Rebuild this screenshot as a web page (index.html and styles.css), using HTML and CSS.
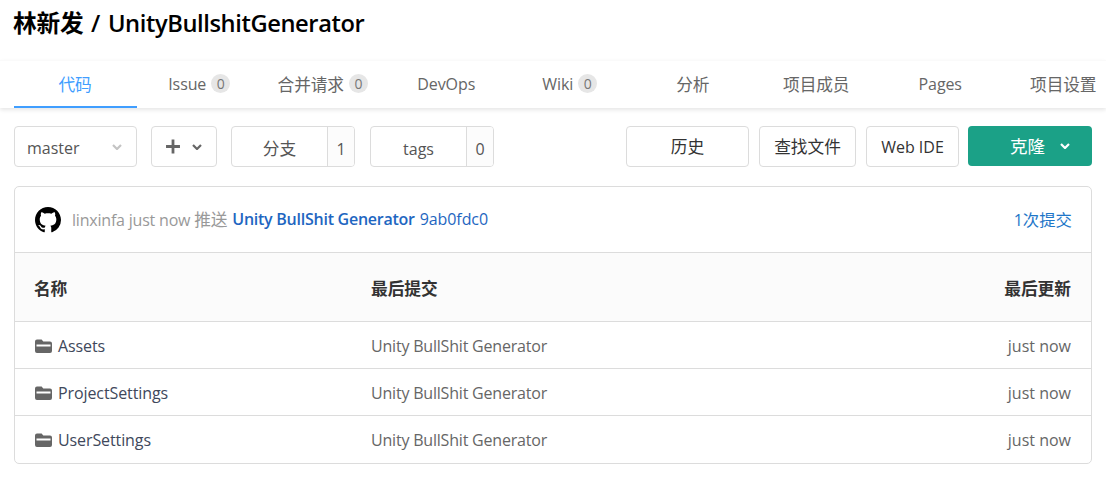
FILE: index.html
```html
<!DOCTYPE html>
<html lang="zh">
<head>
<meta charset="utf-8">
<title>UnityBullshitGenerator</title>
<link rel="stylesheet" href="styles.css">
</head>
<body>
<h1 class="title"><span class="title-owner">林新发</span> / <span class="title-repo">UnityBullshitGenerator</span></h1>
<nav class="tabs">
  <a class="tab active cjk">代码</a>
  <a class="tab">Issue<span class="count">0</span></a>
  <a class="tab"><span class="cjk">合并请求</span><span class="count">0</span></a>
  <a class="tab">DevOps</a>
  <a class="tab">Wiki<span class="count">0</span></a>
  <a class="tab cjk">分析</a>
  <a class="tab cjk">项目成员</a>
  <a class="tab">Pages</a>
  <a class="tab cjk">项目设置</a>
</nav>
<div class="toolbar">
  <div class="btn select"><span class="select-label">master</span>
    <svg class="chev light" viewBox="0 0 10 6"><path d="M1 1l4 4 4-4"/></svg></div>
  <div class="btn add">
    <svg class="plus" viewBox="0 0 14 14"><path d="M7 0.5v13M0.5 7h13"/></svg>
    <svg class="chev" viewBox="0 0 10 6"><path d="M1 1l4 4 4-4"/></svg></div>
  <div class="btn stat"><span class="stat-label cjk">分支</span><span class="stat-num">1</span></div>
  <div class="btn stat"><span class="stat-label latin">tags</span><span class="stat-num">0</span></div>
  <div class="spacer"></div>
  <div class="btn action history cjk">历史</div>
  <div class="btn action find cjk">查找文件</div>
  <div class="btn action ide">Web IDE</div>
  <div class="btn clone"><span class="clone-label">克隆</span>
    <svg class="chev white" viewBox="0 0 10 6"><path d="M1 1l4 4 4-4"/></svg></div>
</div>
<section class="card">
  <div class="commit">
    <svg class="avatar" viewBox="0 0 16 16"><path d="M8 0C3.58 0 0 3.58 0 8c0 3.54 2.29 6.53 5.47 7.59.4.07.55-.17.55-.38 0-.19-.01-.82-.01-1.49-2.01.37-2.53-.49-2.69-.94-.09-.23-.48-.94-.82-1.13-.28-.15-.68-.52-.01-.53.63-.01 1.08.58 1.23.82.72 1.21 1.87.87 2.33.66.07-.52.28-.87.51-1.07-1.78-.2-3.64-.89-3.64-3.95 0-.87.31-1.59.82-2.15-.08-.2-.36-1.02.08-2.12 0 0 .67-.21 2.2.82.64-.18 1.32-.27 2-.27s1.36.09 2 .27c1.53-1.04 2.2-.82 2.2-.82.44 1.1.16 1.92.08 2.12.51.56.82 1.27.82 2.15 0 3.07-1.87 3.75-3.65 3.95.29.25.54.73.54 1.48 0 1.07-.01 1.93-.01 2.2 0 .21.15.46.55.38A8.01 8.01 0 0 0 16 8c0-4.42-3.58-8-8-8z"/></svg>
    <span class="meta">linxinfa just now <span class="cjk">推送</span></span>
    <a class="msg">Unity BullShit Generator</a>
    <a class="sha">9ab0fdc0</a>
    <a class="commits">1<span class="commits-label">次提交</span></a>
  </div>
  <div class="row head">
    <span class="c-name cjk">名称</span><span class="c-msg cjk">最后提交</span><span class="c-time cjk">最后更新</span>
  </div>
  <div class="row">
    <span class="c-name"><svg class="folder" viewBox="0 0 17 14"><path d="M2 0.5h4.6l1.7 2H15a2 2 0 0 1 2 2v7.5a2 2 0 0 1-2 2H2a2 2 0 0 1-2-2V2.5a2 2 0 0 1 2-2z"/><rect class="slot" x="1.5" y="5.5" width="14" height="2"/></svg>Assets</span>
    <span class="c-msg">Unity BullShit Generator</span><span class="c-time">just now</span>
  </div>
  <div class="row">
    <span class="c-name"><svg class="folder" viewBox="0 0 17 14"><path d="M2 0.5h4.6l1.7 2H15a2 2 0 0 1 2 2v7.5a2 2 0 0 1-2 2H2a2 2 0 0 1-2-2V2.5a2 2 0 0 1 2-2z"/><rect class="slot" x="1.5" y="5.5" width="14" height="2"/></svg>ProjectSettings</span>
    <span class="c-msg">Unity BullShit Generator</span><span class="c-time">just now</span>
  </div>
  <div class="row">
    <span class="c-name"><svg class="folder" viewBox="0 0 17 14"><path d="M2 0.5h4.6l1.7 2H15a2 2 0 0 1 2 2v7.5a2 2 0 0 1-2 2H2a2 2 0 0 1-2-2V2.5a2 2 0 0 1 2-2z"/><rect class="slot" x="1.5" y="5.5" width="14" height="2"/></svg>UserSettings</span>
    <span class="c-msg">Unity BullShit Generator</span><span class="c-time">just now</span>
  </div>
</section>
</body>
</html>
```
FILE: styles.css
```css
* { box-sizing: border-box; }
html, body { height: 100%; }
body {
  margin: 0;
  overflow: hidden;
  background: #fff;
  color: #40485b;
  font-family: "Open Sans", "Noto Sans CJK SC", sans-serif;
  font-size: 16px;
}
.cjk { font-size: 16.7px; }
.title {
  margin: 0;
  height: 60px;
  padding: 8px 0 0 13px;
  font-size: 23.7px;
  line-height: 30px;
  font-weight: 600;
  word-spacing: 1.5px;
  color: #000;
}
.title-owner { letter-spacing: -0.25px; }
.title-repo { letter-spacing: -0.4px; }
.tabs {
  display: flex;
  height: 48px;
  padding-left: 14px;
  overflow: hidden;
  border-top: 1px solid #fafafa;
  box-shadow: 0 2px 4px rgba(0,0,0,.1);
}
.tab {
  flex: 0 0 123.5px;
  display: flex;
  align-items: center;
  justify-content: center;
  height: 47px;
  color: #666;
  letter-spacing: -0.1px;
  border-bottom: 2px solid transparent;
}
.tab.cjk { padding-right: 1px; }
.tab.active {
  flex-basis: 123px;
  margin-right: 0.5px;
  color: #409eff;
  border-bottom-color: #409eff;
}
.count {
  display: inline-block;
  width: 19px;
  height: 19px;
  margin-left: 5px;
  border-radius: 50%;
  background: #e6e6e6;
  color: #777;
  font-size: 14px;
  line-height: 19px;
  text-align: center;
}
.toolbar {
  display: flex;
  margin: 18px 14px 0;
  height: 41px;
}
.spacer { flex: 1; }
.btn {
  display: flex;
  align-items: center;
  justify-content: center;
  height: 41px;
  border: 1px solid #dcdcdc;
  border-radius: 4px;
  background: #fff;
  color: #333;
}
.select {
  width: 123px;
  justify-content: space-between;
  padding: 0 14px 0 12px;
  color: #555;
  margin-right: 14px;
}
.select-label { padding-top: 2px; }
.add { width: 66px; gap: 11px; margin-right: 14px; padding-right: 2px; }
.stat { width: 124px; margin-right: 15px; overflow: hidden; color: #555; }
.stat-label { flex: 1; text-align: center; padding-top: 3px; }
.stat-label.latin { padding-top: 5px; }
.stat-num {
  width: 27px;
  height: 100%;
  border-left: 1px solid #dcdcdc;
  background: #fcfcfc;
  text-align: center;
  line-height: 44px;
}
.action { color: #333; }
.history { width: 123px; margin-right: 10px; padding-bottom: 2px; }
.find { width: 97px; margin-right: 10px; padding-bottom: 2px; }
.ide { width: 93px; margin-right: 9px; }
.clone {
  width: 124px;
  height: 40px;
  gap: 15px;
  padding-left: 42px;
  border: 0;
  background: #1ba187;
  color: #fff;
  justify-content: flex-start;
}
.clone-label { font-size: 17.5px; padding-bottom: 2px; }
.chev { width: 10px; height: 6px; fill: none; stroke: #666; stroke-width: 2.2; }
.chev.light { stroke: #c4c4c4; }
.chev.white { stroke: #fff; }
.plus { width: 16px; height: 15px; fill: none; stroke: #666; stroke-width: 2.6; }
.card {
  margin: 19px 14px 0;
  border: 1px solid #dcdcdc;
  border-radius: 5px;
  overflow: hidden;
}
.commit {
  display: flex;
  align-items: center;
  height: 66px;
  padding: 0 19px 2px 20px;
  border-bottom: 1px solid #dcdcdc;
}
.avatar { width: 26px; height: 26px; margin: 2px 11px 0 0; flex: none; fill: #000; }
.meta { color: #999; margin-right: 5px; letter-spacing: -0.2px; }
.msg { color: #1e66c1; font-weight: 600; margin-right: 5px; letter-spacing: -0.25px; }
.sha { color: #1e66c1; letter-spacing: -0.1px; }
.commits { margin-left: auto; color: #1e76c8; }
.commits-label { font-size: 16.4px; }
.row {
  display: flex;
  align-items: center;
  height: 47px;
  padding: 1px 20px 0 19px;
  border-bottom: 1px solid #dcdcdc;
  color: #666;
}
.row:last-child { border-bottom: 0; }
.row.head {
  height: 69px;
  padding-top: 2px;
  background: #fbfbfb;
  color: #333;
  font-weight: 600;
}
.c-name { width: 337px; display: flex; align-items: center; color: #40485b; letter-spacing: -0.1px; }
.head .c-name { color: #333; }
.c-msg { flex: 1; letter-spacing: -0.2px; }
.head .c-msg { letter-spacing: 0; }
.c-time { text-align: right; }
.folder { width: 17px; height: 14px; margin: 0 6px 0 1px; fill: #666; }
.slot { fill: #fff; }
```
